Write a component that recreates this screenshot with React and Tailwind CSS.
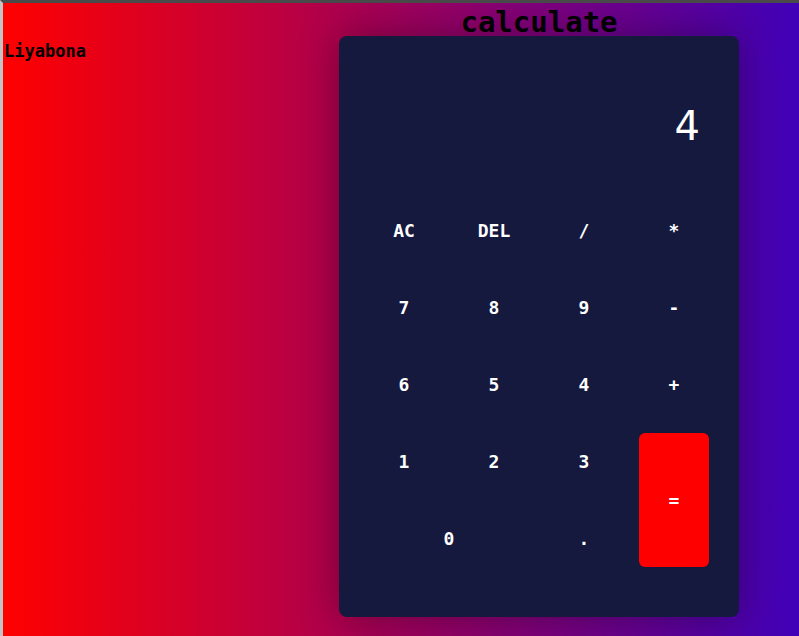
// App.jsx
import { useState } from 'react';

// Layout der Tasten: label, Spalten-/Zeilen-Span
const KEYS = [
    { label: 'AC' }, { label: 'DEL' }, { label: '/' }, { label: '*' },
    { label: '7' }, { label: '8' }, { label: '9' }, { label: '-' },
    { label: '6' }, { label: '5' }, { label: '4' }, { label: '+' },
    { label: '1' }, { label: '2' }, { label: '3' },
    { label: '=', equals: true },
    { label: '0', wide: true }, { label: '.' },
];

const mono = { fontFamily: '"DejaVu Sans Mono", "Liberation Mono", monospace' };

const Key = ({ k, onPress }) => {
    let cls = 'flex items-center justify-center text-white text-[18px] font-bold rounded-md';
    if (k.wide) cls += ' col-span-2';
    if (k.equals) cls += ' row-span-2 bg-[#ff0000] text-[17px]';
    return (
        <button className={cls} style={mono} onClick={() => onPress(k.label)}>
            {k.label}
        </button>
    );
};

export default function App() {
    const [display, setDisplay] = useState('4');

    const handlePress = (label) => {
        if (label === 'AC') return setDisplay('');
        if (label === 'DEL') return setDisplay(d => d.slice(0, -1));
        if (label === '=') {
            try {
                // eslint-disable-next-line no-new-func
                setDisplay(String(Function(`return (${display})`)()));
            } catch {
                setDisplay('Error');
            }
            return;
        }
        setDisplay(d => d + label);
    };

    return (
        <div
            className="min-h-screen flex border-t-[3px] border-t-[#4a4a4a] border-l-[3px] border-l-[#c4c4c4] bg-[linear-gradient(to_right,#ff0000,#4000b8)]"
            style={mono}
        >
            {/* --- Name links --- */}
            <div className="w-[336px] shrink-0 pl-px pt-[37px] text-[17px] leading-[22px] font-bold text-black">
                Liyabona
            </div>

            {/* --- Rechner --- */}
            <div className="w-[400px] shrink-0 flex flex-col">
                <h1 className="h-[33px] pt-[5px] text-center text-[29px] leading-[28px] font-bold text-black">
                    calculate
                </h1>
                <div className="bg-[#15193d] rounded-lg px-[30px] pt-[30px] pb-[50px] shadow-[0_0_40px_rgba(0,0,0,0.35)]">
                    <div
                        className="h-[116px] flex items-center justify-end pr-[9px] pt-[3px] text-white text-[40px]"
                        style={{ fontFamily: '"DejaVu Sans", "Liberation Sans", sans-serif' }}
                    >
                        {display}
                    </div>
                    <div className="mt-[20px] grid grid-cols-[repeat(4,70px)] auto-rows-[57px] gap-x-[20px] gap-y-[20px]">
                        {KEYS.map(k => (
                            <Key key={k.label} k={k} onPress={handlePress} />
                        ))}
                    </div>
                </div>
            </div>
        </div>
    );
}
